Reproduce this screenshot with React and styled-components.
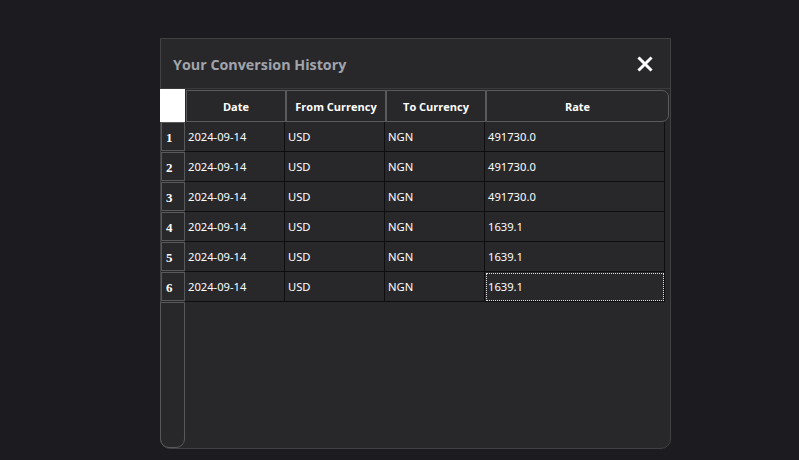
import styled, { createGlobalStyle } from "styled-components";

const Global = createGlobalStyle`
  html, body {
    margin: 0;
    background: #1c1b1f;
    height: 460px;
    overflow: hidden;
  }
`;

const Page = styled.div`
  padding: 38px 0 0 160px;
`;

const Dialog = styled.div`
  width: 511px;
  height: 411px;
  box-sizing: border-box;
  background: #28282b;
  border: 1px solid #414144;
  border-radius: 0 0 10px 10px;
  display: flex;
  flex-direction: column;
`;

const Header = styled.div`
  height: 49px;
  border-bottom: 1px solid #3a3a3d;
  display: flex;
  align-items: center;
  justify-content: space-between;
  padding: 0 17px 0 12px;
  flex-shrink: 0;
`;

const Title = styled.h2`
  margin: 2px 0 0;
  font-family: "Open Sans", "Noto Sans", sans-serif;
  font-weight: 700;
  font-size: 14.3px;
  color: #a0a4ab;
`;

const Close = styled.button`
  background: none;
  border: none;
  padding: 0;
  width: 16px;
  height: 16px;
  display: flex;
  cursor: pointer;
`;

const Body = styled.div`
  flex: 1;
  display: flex;
  min-height: 0;
`;

const VHeader = styled.div`
  width: 24px;
  display: flex;
  flex-direction: column;
  flex-shrink: 0;
`;

const Corner = styled.div`
  height: 33px;
  background: #ffffff;
  margin-left: -1px;
`;

const VCell = styled.div`
  height: 27px;
  margin-bottom: 1px;
  border: 1px solid #58585b;
  box-sizing: content-box;
  display: flex;
  align-items: center;
  padding: 3px 0 0 4px;
  height: 24px;
  font-family: "Liberation Serif", serif;
  font-weight: 700;
  font-size: 13px;
  color: #ffffff;
`;

const VFill = styled.div`
  flex: 1;
  border: 1px solid #58585b;
  border-bottom-left-radius: 9px;
  border-bottom-right-radius: 9px;
  margin-left: -1px;
`;

const Grid = styled.div`
  flex: 1;
  display: flex;
  flex-direction: column;
`;

const HeadRow = styled.div`
  display: flex;
  margin: 1px 0 0 1px;
  height: 32px;
`;

const HeadCell = styled.div`
  width: ${(p) => p.$w}px;
  box-sizing: border-box;
  border: 1px solid #5a5a5d;
  border-radius: ${(p) => (p.$last ? "0 7px 7px 0" : "0")};
  display: flex;
  align-items: center;
  justify-content: center;
  font-family: "Open Sans", "Noto Sans", sans-serif;
  font-weight: 700;
  font-size: 11px;
  color: #ffffff;
`;

const Row = styled.div`
  display: flex;
  height: 30px;
`;

const Cell = styled.div`
  width: ${(p) => p.$w}px;
  box-sizing: border-box;
  border-right: 1px solid #0e0e10;
  border-bottom: 1px solid #0e0e10;
  display: flex;
  align-items: center;
  padding-left: 3px;
  font-family: "Noto Sans", "Open Sans", sans-serif;
  font-size: 11.2px;
  color: #ffffff;
  outline: ${(p) => (p.$focus ? "1px dotted #e0e0e0" : "none")};
  outline-offset: -2px;
`;

const columns = [
  { label: "Date", w: 100 },
  { label: "From Currency", w: 100 },
  { label: "To Currency", w: 100 },
  { label: "Rate", w: 180 },
];

const rows = [
  ["2024-09-14", "USD", "NGN", "491730.0"],
  ["2024-09-14", "USD", "NGN", "491730.0"],
  ["2024-09-14", "USD", "NGN", "491730.0"],
  ["2024-09-14", "USD", "NGN", "1639.1"],
  ["2024-09-14", "USD", "NGN", "1639.1"],
  ["2024-09-14", "USD", "NGN", "1639.1"],
];

const App = () => {
  return (
    <>
      <Global />
      <Page>
        <Dialog>
          <Header>
            <Title>Your Conversion History</Title>
            <Close aria-label="Close">
              <svg width="16" height="16" viewBox="0 0 16 16">
                <path
                  d="M2.5 2.5 L13.5 13.5 M13.5 2.5 L2.5 13.5"
                  stroke="#ffffff"
                  strokeWidth="3"
                  strokeLinecap="square"
                />
              </svg>
            </Close>
          </Header>
          <Body>
            <VHeader>
              <Corner />
              {rows.map((_, i) => (
                <VCell key={i}>{i + 1}</VCell>
              ))}
              <VFill />
            </VHeader>
            <Grid>
              <HeadRow>
                {columns.map((c, i) => (
                  <HeadCell key={c.label} $w={i === 3 ? 183 : c.w} $last={i === 3}>
                    {c.label}
                  </HeadCell>
                ))}
              </HeadRow>
              {rows.map((r, i) => (
                <Row key={i}>
                  {r.map((v, j) => (
                    <Cell key={j} $w={j === 3 ? 180 : 100} $focus={i === 5 && j === 3}>
                      {v}
                    </Cell>
                  ))}
                </Row>
              ))}
            </Grid>
          </Body>
        </Dialog>
      </Page>
    </>
  );
};

export default App;
